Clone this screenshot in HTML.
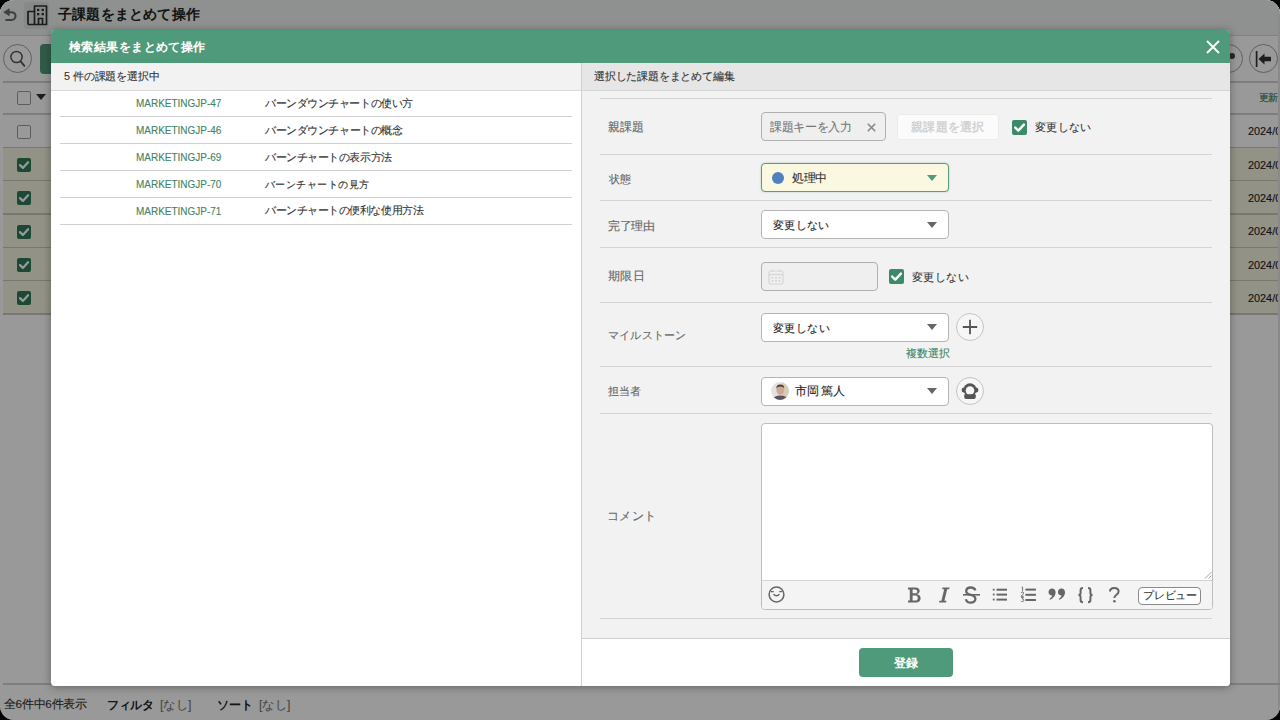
<!DOCTYPE html>
<html><head><meta charset="utf-8">
<style>
*{box-sizing:border-box;margin:0;padding:0}
html,body{width:1280px;height:720px;overflow:hidden;background:#000}
body{font-family:"Liberation Sans",sans-serif;color:#333;position:relative}
.a{position:absolute}
.t{position:absolute;white-space:nowrap;line-height:1;-webkit-text-stroke:0.12px currentColor}
#app{position:absolute;left:0;top:0;width:1280px;height:720px;background:#fff;overflow:hidden;border-radius:14px}
#ov{position:absolute;left:0;top:0;width:1280px;height:720px;background:rgba(0,0,0,0.4);border-radius:14px}
#modal{position:absolute;left:51px;top:30px;width:1179px;height:656px;background:#fff;border-radius:4px;overflow:hidden;box-shadow:0 1px 8px rgba(0,0,0,0.35)}
#ml{position:absolute;left:-51px;top:-30px;width:1280px;height:720px}
</style></head><body>

<div id="app">
<div class="a" style="left:0px;top:0px;width:1280px;height:35px;background:#edf2ee"></div>
<div class="a" style="left:0px;top:35px;width:1280px;height:1px;background:#d6d8d6"></div>
<div class="a" style="left:24px;top:2px;width:25px;height:27px;background:#e2e5e3;border-radius:3px"></div>
<svg class="a" style="left:2px;top:7px" width="16" height="16" viewBox="0 0 16 16"><path d="M1.8 5.2 L7.2 1.8 V8.6 Z" fill="#6a6a6a" stroke="#6a6a6a" stroke-width="0.8" stroke-linejoin="round"/><path d="M6.5 5.2 H9.6 a3.9 3.9 0 0 1 0 7.8 H4.2" fill="none" stroke="#6a6a6a" stroke-width="2.1" stroke-linecap="round"/></svg>
<svg class="a" style="left:26px;top:4px" width="23" height="23" viewBox="0 0 23 23"><path d="M2 20.5 V7.5 H8.5 M8.5 20.5 V2 H20.5 V20.5 Z M2 20.5 H20.5" fill="none" stroke="#2e2e2e" stroke-width="1.7" stroke-linejoin="round"/><rect x="11" y="4.8" width="2.3" height="2.3" fill="#2e2e2e"/><rect x="15.6" y="4.8" width="2.3" height="2.3" fill="#2e2e2e"/><rect x="11" y="9" width="2.3" height="2.3" fill="#2e2e2e"/><rect x="15.6" y="9" width="2.3" height="2.3" fill="#2e2e2e"/><path d="M12.5 20.5 V14.5 H16.5 V20.5" fill="none" stroke="#2e2e2e" stroke-width="1.7"/></svg>
<div class="t" style="left:58.00px;top:7.04px;font-size:14px;color:#222;font-weight:bold;-webkit-text-stroke:0;transform-origin:0 0;transform:scale(1.0143,1.0143);">子課題をまとめて操作</div>
<div class="a" style="left:3px;top:44px;width:29px;height:29px;border:1px solid #a0a0a0;border-radius:50%"></div>
<svg class="a" style="left:8px;top:49px" width="19" height="19" viewBox="0 0 19 19"><circle cx="8.5" cy="8" r="5.6" fill="none" stroke="#555" stroke-width="1.5"/><path d="M12.6 12.4 L16.4 16.8" stroke="#555" stroke-width="1.8" stroke-linecap="round"/></svg>
<div class="a" style="left:40px;top:44px;width:60px;height:30px;background:#4f9a7a;border-radius:4px"></div>
<div class="a" style="left:3px;top:81px;width:1277px;height:2px;background:#d2d2d2"></div>
<div class="a" style="left:17px;top:91px;width:14px;height:14px;border:1.6px solid #9a9a9a;border-radius:2px;background:#fff"></div>
<svg class="a" style="left:36.0px;top:94px" width="10" height="6" viewBox="0 0 10 6"><path d="M0 0 H10 L5.0 6 Z" fill="#333"/></svg>
<div class="a" style="left:3px;top:113px;width:1277px;height:2px;background:#d2d2d2"></div>
<div class="t" style="left:1259.14px;top:93.00px;font-size:11px;color:#2f7a58;font-weight:normal;transform-origin:0 0;transform:scale(0.8636,0.8636);">更新</div>
<div class="a" style="left:17px;top:125px;width:14px;height:14px;border:1.6px solid #9a9a9a;border-radius:2px;background:#fff"></div>
<div class="a" style="left:3px;top:147.3px;width:1277px;height:166.7px;background:#f5f3df"></div>
<div class="a" style="left:3px;top:146.82999999999998px;width:1277px;height:1.2px;background:#c9c8bb"></div>
<div class="a" style="left:3px;top:180.16px;width:1277px;height:1.2px;background:#c9c8bb"></div>
<div class="a" style="left:3px;top:213.49px;width:1277px;height:1.2px;background:#c9c8bb"></div>
<div class="a" style="left:3px;top:246.82px;width:1277px;height:1.2px;background:#c9c8bb"></div>
<div class="a" style="left:3px;top:280.15px;width:1277px;height:1.2px;background:#c9c8bb"></div>
<div class="a" style="left:3px;top:313.48px;width:1277px;height:1.2px;background:#c9c8bb"></div>
<div class="a" style="left:17px;top:158.0px;width:14px;height:14px;border-radius:2px;background:#2f7a58"><svg width="14" height="14" viewBox="0 0 15 15" style="position:absolute;left:0;top:0"><path d="M3.2 7.6 L6.3 10.6 L11.9 4.6" fill="none" stroke="#fff" stroke-width="2.4" stroke-linecap="round" stroke-linejoin="round"/></svg></div>
<div class="a" style="left:17px;top:191.32999999999998px;width:14px;height:14px;border-radius:2px;background:#2f7a58"><svg width="14" height="14" viewBox="0 0 15 15" style="position:absolute;left:0;top:0"><path d="M3.2 7.6 L6.3 10.6 L11.9 4.6" fill="none" stroke="#fff" stroke-width="2.4" stroke-linecap="round" stroke-linejoin="round"/></svg></div>
<div class="a" style="left:17px;top:224.66px;width:14px;height:14px;border-radius:2px;background:#2f7a58"><svg width="14" height="14" viewBox="0 0 15 15" style="position:absolute;left:0;top:0"><path d="M3.2 7.6 L6.3 10.6 L11.9 4.6" fill="none" stroke="#fff" stroke-width="2.4" stroke-linecap="round" stroke-linejoin="round"/></svg></div>
<div class="a" style="left:17px;top:257.99px;width:14px;height:14px;border-radius:2px;background:#2f7a58"><svg width="14" height="14" viewBox="0 0 15 15" style="position:absolute;left:0;top:0"><path d="M3.2 7.6 L6.3 10.6 L11.9 4.6" fill="none" stroke="#fff" stroke-width="2.4" stroke-linecap="round" stroke-linejoin="round"/></svg></div>
<div class="a" style="left:17px;top:291.32px;width:14px;height:14px;border-radius:2px;background:#2f7a58"><svg width="14" height="14" viewBox="0 0 15 15" style="position:absolute;left:0;top:0"><path d="M3.2 7.6 L6.3 10.6 L11.9 4.6" fill="none" stroke="#fff" stroke-width="2.4" stroke-linecap="round" stroke-linejoin="round"/></svg></div>
<div class="t" style="left:1247.80px;top:126.21px;font-size:11px;color:#222;font-weight:normal;transform-origin:0 0;transform:scale(0.9875,0.9875);">2024/0</div>
<div class="t" style="left:1247.80px;top:159.55px;font-size:11px;color:#222;font-weight:normal;transform-origin:0 0;transform:scale(0.9875,0.9875);">2024/0</div>
<div class="t" style="left:1247.80px;top:192.89px;font-size:11px;color:#222;font-weight:normal;transform-origin:0 0;transform:scale(0.9875,0.9875);">2024/0</div>
<div class="t" style="left:1247.80px;top:226.23px;font-size:11px;color:#222;font-weight:normal;transform-origin:0 0;transform:scale(0.9875,0.9875);">2024/0</div>
<div class="t" style="left:1247.80px;top:259.57px;font-size:11px;color:#222;font-weight:normal;transform-origin:0 0;transform:scale(0.9875,0.9875);">2024/0</div>
<div class="t" style="left:1247.80px;top:292.91px;font-size:11px;color:#222;font-weight:normal;transform-origin:0 0;transform:scale(0.9875,0.9875);">2024/0</div>
<div class="a" style="left:1214px;top:44px;width:29px;height:29px;border:1px solid #a0a0a0;border-radius:50%"></div>
<div class="a" style="left:1229px;top:53px;width:6px;height:6px;background:#444;border-radius:50%"></div>
<div class="a" style="left:1249px;top:44px;width:29px;height:29px;border:1px solid #a0a0a0;border-radius:50%"></div>
<svg class="a" style="left:1254px;top:50px" width="18" height="18" viewBox="0 0 18 18"><path d="M2.6 1 V17" stroke="#333" stroke-width="1.7"/><path d="M4.5 9 L10.5 3.5 V6.8 H17 V11.2 H10.5 V14.5 Z" fill="#333"/></svg>
<div class="a" style="left:1278px;top:0px;width:2px;height:720px;background:#e6e6e6"></div>
<div class="a" style="left:3px;top:683px;width:1277px;height:2px;background:#d2d2d2"></div>
<div class="t" style="left:3.75px;top:697.62px;font-size:12px;color:#333;font-weight:normal;transform-origin:0 0;transform:scale(0.9676,0.9676);">全6件中6件表示</div>
<div class="t" style="left:107.14px;top:698.77px;font-size:12px;color:#222;font-weight:bold;-webkit-text-stroke:0;transform-origin:0 0;transform:scale(0.9589,0.9589);">フィルタ</div>
<div class="t" style="left:159.58px;top:698.64px;font-size:12px;color:#777;font-weight:normal;transform-origin:0 0;transform:scale(1.0224,1.0224);">[なし]</div>
<div class="t" style="left:217.10px;top:698.82px;font-size:12px;color:#222;font-weight:bold;-webkit-text-stroke:0;transform-origin:0 0;transform:scale(0.9969,0.9969);">ソート</div>
<div class="t" style="left:258.73px;top:698.64px;font-size:12px;color:#777;font-weight:normal;transform-origin:0 0;transform:scale(1.0224,1.0224);">[なし]</div>
</div>
<div id="ov"></div>
<div id="modal"><div id="ml">
<div class="a" style="left:51px;top:30px;width:1179px;height:33px;background:#4f9a7a"></div>
<div class="t" style="left:69.00px;top:40.67px;font-size:12px;color:#fff;font-weight:bold;-webkit-text-stroke:0;transform-origin:0 0;transform:scale(1.0348,1.0348);">検索結果をまとめて操作</div>
<svg class="a" style="left:1206px;top:40px" width="14" height="14" viewBox="0 0 14 14"><path d="M1 1 L13 13 M13 1 L1 13" stroke="#fff" stroke-width="1.9"/></svg>
<div class="a" style="left:51px;top:63px;width:530px;height:27px;background:#f2f2f2"></div>
<div class="a" style="left:51px;top:90px;width:530px;height:1px;background:#dadada"></div>
<div class="t" style="left:63.77px;top:71.17px;font-size:11px;color:#333;font-weight:normal;transform-origin:0 0;transform:scale(0.9826,0.9826);">5 件の課題を選択中</div>
<div class="t" style="left:136.19px;top:98.44px;font-size:11px;color:#3f8464;font-weight:normal;transform-origin:0 0;transform:scale(0.9075,0.9625);">MARKETINGJP-47</div>
<div class="t" style="left:264.90px;top:98.12px;font-size:11px;color:#333;font-weight:normal;transform-origin:0 0;transform:scale(0.9591,0.9591);">バーンダウンチャートの使い方</div>
<div class="a" style="left:60px;top:116px;width:512px;height:1px;background:#d0d0d0"></div>
<div class="t" style="left:136.19px;top:125.44px;font-size:11px;color:#3f8464;font-weight:normal;transform-origin:0 0;transform:scale(0.9075,0.9625);">MARKETINGJP-46</div>
<div class="t" style="left:264.90px;top:125.41px;font-size:11px;color:#333;font-weight:normal;transform-origin:0 0;transform:scale(0.9609,0.9609);">バーンダウンチャートの概念</div>
<div class="a" style="left:60px;top:143px;width:512px;height:1px;background:#d0d0d0"></div>
<div class="t" style="left:136.19px;top:152.44px;font-size:11px;color:#3f8464;font-weight:normal;transform-origin:0 0;transform:scale(0.9075,0.9625);">MARKETINGJP-69</div>
<div class="t" style="left:264.90px;top:152.30px;font-size:11px;color:#333;font-weight:normal;transform-origin:0 0;transform:scale(0.9591,0.9591);">バーンチャートの表示方法</div>
<div class="a" style="left:60px;top:170px;width:512px;height:1px;background:#d0d0d0"></div>
<div class="t" style="left:136.19px;top:179.44px;font-size:11px;color:#3f8464;font-weight:normal;transform-origin:0 0;transform:scale(0.9075,0.9625);">MARKETINGJP-70</div>
<div class="t" style="left:264.90px;top:179.14px;font-size:11px;color:#333;font-weight:normal;transform-origin:0 0;transform:scale(0.9527,0.9527);">バーンチャートの見方</div>
<div class="a" style="left:60px;top:197px;width:512px;height:1px;background:#d0d0d0"></div>
<div class="t" style="left:136.19px;top:206.44px;font-size:11px;color:#3f8464;font-weight:normal;transform-origin:0 0;transform:scale(0.9075,0.9625);">MARKETINGJP-71</div>
<div class="t" style="left:264.90px;top:205.33px;font-size:11px;color:#333;font-weight:normal;transform-origin:0 0;transform:scale(0.9588,0.9588);">バーンチャートの便利な使用方法</div>
<div class="a" style="left:60px;top:224px;width:512px;height:1px;background:#d0d0d0"></div>
<div class="a" style="left:581px;top:63px;width:1px;height:623px;background:#d0d0d0"></div>
<div class="a" style="left:582px;top:63px;width:648px;height:27px;background:#e6e6e6"></div>
<div class="a" style="left:582px;top:90px;width:648px;height:1px;background:#d6d6d6"></div>
<div class="t" style="left:594.27px;top:70.80px;font-size:11px;color:#333;font-weight:normal;transform-origin:0 0;transform:scale(0.9823,0.9823);">選択した課題をまとめて編集</div>
<div class="a" style="left:582px;top:91px;width:648px;height:547px;background:#f2f2f2"></div>
<div class="a" style="left:600px;top:98px;width:612px;height:1px;background:#d4d4d4"></div>
<div class="a" style="left:600px;top:154px;width:612px;height:1px;background:#d4d4d4"></div>
<div class="a" style="left:600px;top:200px;width:612px;height:1px;background:#d4d4d4"></div>
<div class="a" style="left:600px;top:247px;width:612px;height:1px;background:#d4d4d4"></div>
<div class="a" style="left:600px;top:302px;width:612px;height:1px;background:#d4d4d4"></div>
<div class="a" style="left:600px;top:366px;width:612px;height:1px;background:#d4d4d4"></div>
<div class="a" style="left:600px;top:413px;width:612px;height:1px;background:#d4d4d4"></div>
<div class="a" style="left:600px;top:618px;width:612px;height:1px;background:#d4d4d4"></div>
<div class="t" style="left:607.74px;top:121.46px;font-size:12px;color:#666;font-weight:normal;transform-origin:0 0;transform:scale(1.0074,1.0074);">親課題</div>
<div class="t" style="left:609.00px;top:173.05px;font-size:12px;color:#666;font-weight:normal;transform-origin:0 0;transform:scale(0.9500,0.9500);">状態</div>
<div class="t" style="left:608.02px;top:219.87px;font-size:12px;color:#666;font-weight:normal;transform-origin:0 0;transform:scale(0.9783,0.9783);">完了理由</div>
<div class="t" style="left:607.97px;top:270.44px;font-size:12px;color:#666;font-weight:normal;transform-origin:0 0;transform:scale(1.0303,1.0303);">期限日</div>
<div class="t" style="left:608.07px;top:330.46px;font-size:12px;color:#666;font-weight:normal;transform-origin:0 0;transform:scale(0.9317,0.9317);">マイルストーン</div>
<div class="t" style="left:608.07px;top:385.86px;font-size:12px;color:#666;font-weight:normal;transform-origin:0 0;transform:scale(0.9314,0.9314);">担当者</div>
<div class="t" style="left:606.94px;top:510.10px;font-size:12px;color:#666;font-weight:normal;transform-origin:0 0;transform:scale(1.0302,1.0302);">コメント</div>
<div class="a" style="left:761px;top:112px;width:125px;height:29px;background:#efefef;border:1px solid #b0b0b0;border-radius:4px"></div>
<div class="t" style="left:770.00px;top:121.18px;font-size:12px;color:#777;font-weight:normal;transform-origin:0 0;transform:scale(0.9707,0.9707);">課題キーを入力</div>
<svg class="a" style="left:867px;top:123px" width="9" height="9" viewBox="0 0 9 9"><path d="M0.8 0.8 L8.2 8.2 M8.2 0.8 L0.8 8.2" stroke="#888" stroke-width="1.6"/></svg>
<div class="a" style="left:897px;top:114px;width:102px;height:26px;background:#fbfbfb;border:1px solid #ebebeb;border-radius:3px"></div>
<div class="t" style="left:911.30px;top:121.01px;font-size:12px;color:#d2d2d2;font-weight:bold;-webkit-text-stroke:0;transform-origin:0 0;transform:scale(1.0236,1.0236);">親課題を選択</div>
<div class="a" style="left:1012px;top:120px;width:15px;height:15px;border-radius:2px;background:#3d8a68"><svg width="15" height="15" viewBox="0 0 15 15" style="position:absolute;left:0;top:0"><path d="M3.2 7.6 L6.3 10.6 L11.9 4.6" fill="none" stroke="#fff" stroke-width="2.4" stroke-linecap="round" stroke-linejoin="round"/></svg></div>
<div class="t" style="left:1035.00px;top:122.29px;font-size:12px;color:#333;font-weight:normal;transform-origin:0 0;transform:scale(0.9433,0.9433);">変更しない</div>
<div class="a" style="left:761px;top:163px;width:188px;height:29px;background:#fbf8e1;border:1.5px solid #5b9c7c;border-radius:4px;box-shadow:0 0 2px rgba(79,154,122,0.45)"></div>
<div class="a" style="left:772px;top:172px;width:12px;height:12px;background:#4f80c0;border-radius:50%"></div>
<div class="t" style="left:791.80px;top:172.19px;font-size:12px;color:#333;font-weight:normal;transform-origin:0 0;transform:scale(0.9600,0.9600);">処理中</div>
<svg class="a" style="left:927.0px;top:175px" width="10" height="6" viewBox="0 0 10 6"><path d="M0 0 H10 L5.0 6 Z" fill="#4f9a7a"/></svg>
<div class="a" style="left:761px;top:210px;width:188px;height:29px;background:#fff;border:1px solid #b5b5b5;border-radius:4px"></div>
<div class="t" style="left:773.00px;top:219.65px;font-size:12px;color:#222;font-weight:normal;transform-origin:0 0;transform:scale(0.9417,0.9417);">変更しない</div>
<svg class="a" style="left:927.0px;top:222px" width="10" height="6" viewBox="0 0 10 6"><path d="M0 0 H10 L5.0 6 Z" fill="#666"/></svg>
<div class="a" style="left:761px;top:262px;width:117px;height:29px;background:#efefef;border:1px solid #b0b0b0;border-radius:4px"></div>
<svg class="a" style="left:768px;top:269px" width="16" height="16" viewBox="0 0 16 16"><rect x="1" y="2" width="14" height="13" rx="1.5" fill="none" stroke="#d5d5d5" stroke-width="1.2"/><path d="M1 5.5 H15" stroke="#d5d5d5" stroke-width="1.2"/><path d="M4.5 0.5 V3 M11.5 0.5 V3" stroke="#d5d5d5" stroke-width="1.2"/><g fill="#d5d5d5"><rect x="3.5" y="8" width="2" height="1.5"/><rect x="7" y="8" width="2" height="1.5"/><rect x="10.5" y="8" width="2" height="1.5"/><rect x="3.5" y="11" width="2" height="1.5"/><rect x="7" y="11" width="2" height="1.5"/><rect x="10.5" y="11" width="2" height="1.5"/></g></svg>
<div class="a" style="left:889px;top:269px;width:15px;height:15px;border-radius:2px;background:#3d8a68"><svg width="15" height="15" viewBox="0 0 15 15" style="position:absolute;left:0;top:0"><path d="M3.2 7.6 L6.3 10.6 L11.9 4.6" fill="none" stroke="#fff" stroke-width="2.4" stroke-linecap="round" stroke-linejoin="round"/></svg></div>
<div class="t" style="left:912.00px;top:271.10px;font-size:12px;color:#333;font-weight:normal;transform-origin:0 0;transform:scale(0.9500,0.9500);">変更しない</div>
<div class="a" style="left:761px;top:313px;width:188px;height:29px;background:#fff;border:1px solid #b5b5b5;border-radius:4px"></div>
<div class="t" style="left:773.00px;top:322.30px;font-size:12px;color:#222;font-weight:normal;transform-origin:0 0;transform:scale(0.9500,0.9500);">変更しない</div>
<svg class="a" style="left:927.0px;top:324px" width="10" height="6" viewBox="0 0 10 6"><path d="M0 0 H10 L5.0 6 Z" fill="#666"/></svg>
<div class="a" style="left:956px;top:313px;width:28px;height:28px;background:#f6f6f6;border:1px solid #c4c4c4;border-radius:50%"></div>
<svg class="a" style="left:962px;top:319px" width="16" height="16" viewBox="0 0 16 16"><path d="M8 0.8 V15.2 M0.8 8 H15.2" stroke="#555" stroke-width="1.8"/></svg>
<div class="t" style="left:906.25px;top:347.63px;font-size:11px;color:#3f8464;font-weight:normal;transform-origin:0 0;transform:scale(0.9849,0.9849);">複数選択</div>
<div class="a" style="left:761px;top:377px;width:188px;height:29px;background:#fff;border:1px solid #b5b5b5;border-radius:4px"></div>
<svg class="a" style="left:771px;top:382px" width="18" height="18" viewBox="0 0 18 18"><defs><clipPath id="av"><circle cx="9" cy="9" r="8.9"/></clipPath></defs><g clip-path="url(#av)"><rect width="18" height="18" fill="#e4e2de"/><rect x="11" width="7" height="18" fill="#d2ceb8"/><ellipse cx="9.3" cy="8" rx="3.9" ry="4.9" fill="#cfa894"/><path d="M5.3 6.5 Q5.2 2.4 9.3 2.4 Q13.3 2.4 13.3 6.5 Q12.5 4.3 9.3 4.4 Q6.2 4.3 5.3 6.5Z" fill="#4a3c34"/><path d="M1.5 18 Q2.5 13.6 9.3 13.4 Q16 13.6 17 18Z" fill="#5a5262"/></g></svg>
<div class="t" style="left:795.30px;top:385.48px;font-size:12px;color:#222;font-weight:normal;transform-origin:0 0;transform:scale(0.9620,0.9620);">市岡 篤人</div>
<svg class="a" style="left:927.0px;top:388px" width="10" height="6" viewBox="0 0 10 6"><path d="M0 0 H10 L5.0 6 Z" fill="#666"/></svg>
<div class="a" style="left:956px;top:377px;width:28px;height:28px;background:#f6f6f6;border:1px solid #c4c4c4;border-radius:50%"></div>
<svg class="a" style="left:961px;top:382px" width="18" height="18" viewBox="0 0 18 18"><circle cx="9" cy="7.8" r="6.6" fill="#555"/><ellipse cx="2.6" cy="8" rx="2" ry="2.5" fill="#555"/><ellipse cx="15.4" cy="8" rx="2" ry="2.5" fill="#555"/><circle cx="9" cy="8.6" r="4.3" fill="#f6f6f6"/><path d="M3.2 13.2 Q3.2 12.3 4.2 12.3 H13.8 Q14.8 12.3 14.8 13.2 V15 Q14.8 16.9 12.8 16.9 H5.2 Q3.2 16.9 3.2 15 Z" fill="#555"/></svg>
<div class="a" style="left:761px;top:423px;width:452px;height:187px;background:#fff;border:1px solid #bdbdbd;border-radius:4px"></div>
<div class="a" style="left:762px;top:580px;width:450px;height:29px;background:#f4f4f4;border-top:1px solid #d6d6d6;border-radius:0 0 3px 3px"></div>
<svg class="a" style="left:1204px;top:571px" width="8" height="8" viewBox="0 0 8 8"><path d="M1 7.5 L7.5 1 M4.5 7.5 L7.5 4.5" stroke="#999" stroke-width="0.9"/></svg>
<svg class="a" style="left:768px;top:586px" width="17" height="17" viewBox="0 0 17 17"><circle cx="8.5" cy="8.5" r="7.4" fill="none" stroke="#666" stroke-width="1.5"/><path d="M2.8 5.6 H5.8 M11.2 5.6 H14.2" stroke="#666" stroke-width="1.2"/><path d="M5.6 8.3 Q8.5 11.3 11.4 8.3" fill="none" stroke="#666" stroke-width="1.5"/></svg>
<svg class="a" style="left:907px;top:586px" width="15" height="18" viewBox="0 0 15 18"><path d="M1 1.5 H8.6 C12.6 1.5 13.3 5 12.2 6.6 C11.6 7.6 10.6 8 9.6 8.2 C11.6 8.5 13.6 9.5 13.6 12.3 C13.6 15.4 11 16.5 8.8 16.5 H1 V14.6 H2.8 V3.4 H1 Z M5.6 3.5 V7.3 H8.2 C9.6 7.3 10.2 6.4 10.2 5.4 C10.2 4.3 9.6 3.5 8.2 3.5 Z M5.6 9.4 V14.5 H8.6 C10 14.5 10.8 13.6 10.8 11.9 C10.8 10.3 10 9.4 8.6 9.4 Z" fill="#666"/></svg>
<svg class="a" style="left:938px;top:586px" width="12" height="18" viewBox="0 0 12 18"><path d="M4.5 1.5 H11.5 L11.2 3.2 H9.2 L6.4 14.8 H8.4 L8 16.5 H1 L1.4 14.8 H3.4 L6.2 3.2 H4.2 Z" fill="#666"/></svg>
<svg class="a" style="left:962px;top:586px" width="19" height="18" viewBox="0 0 19 18"><path d="M13.4 4.4 C12.8 2.6 11 1.5 8.8 1.5 C6 1.5 4.2 3.1 4.2 5.2 C4.2 7.6 6.6 8.3 8.9 8.9 C11.4 9.6 13.4 10.4 13.4 12.8 C13.4 15 11.4 16.6 8.7 16.6 C6.2 16.6 4.4 15.4 3.8 13.2" fill="none" stroke="#666" stroke-width="2.3"/><path d="M1 8.8 H18" stroke="#666" stroke-width="1.6"/></svg>
<svg class="a" style="left:992px;top:587px" width="16" height="15" viewBox="0 0 16 15"><g fill="#666"><rect x="0.8" y="1.8" width="1.8" height="1.8"/><rect x="0.8" y="6.6" width="1.8" height="1.8"/><rect x="0.8" y="11.6" width="1.8" height="1.8"/><rect x="4.5" y="1.7" width="10.5" height="2"/><rect x="4.5" y="6.6" width="10.5" height="2"/><rect x="4.5" y="11.6" width="10.5" height="2"/></g></svg>
<svg class="a" style="left:1020px;top:586px" width="17" height="17" viewBox="0 0 17 17"><g fill="#666"><rect x="5.4" y="2.6" width="10.5" height="2"/><rect x="5.4" y="7.8" width="10.5" height="2"/><rect x="5.4" y="13" width="10.5" height="2"/></g><g fill="none" stroke="#666" stroke-width="0.9"><path d="M1.6 1.6 L2.6 1 V5.2"/><path d="M1 7.2 Q1.4 6 2.4 6 Q3.6 6 3.6 7.1 Q3.6 8 1 10.3 H3.8"/><path d="M1 11.6 H3.4 L2.2 13 Q3.8 13 3.8 14.3 Q3.8 15.6 2.4 15.6 Q1.3 15.6 1 14.8"/></g></svg>
<svg class="a" style="left:1048px;top:588px" width="18" height="13" viewBox="0 0 18 13"><path d="M4 0.5 C6.2 0.5 7.6 2 7.6 4.2 C7.6 7.8 4.8 10.6 2 11.8 L1.4 11 C3 10 4 8.6 4.2 7.6 C2 7.6 0.5 6.2 0.5 4.1 C0.5 2 2 0.5 4 0.5 Z" fill="#666"/><path d="M13.4 0.5 C15.6 0.5 17 2 17 4.2 C17 7.8 14.2 10.6 11.4 11.8 L10.8 11 C12.4 10 13.4 8.6 13.6 7.6 C11.4 7.6 9.9 6.2 9.9 4.1 C9.9 2 11.4 0.5 13.4 0.5 Z" fill="#666"/></svg>
<svg class="a" style="left:1077px;top:586px" width="17" height="18" viewBox="0 0 17 18"><path d="M6 2 C4.2 2 3.6 2.6 3.6 4.2 V7 C3.6 8.3 3 8.9 1.6 9.1 C3 9.3 3.6 9.9 3.6 11.2 V14 C3.6 15.6 4.2 16.3 6 16.3 M11 2 C12.8 2 13.4 2.6 13.4 4.2 V7 C13.4 8.3 14 8.9 15.4 9.1 C14 9.3 13.4 9.9 13.4 11.2 V14 C13.4 15.6 12.8 16.3 11 16.3" fill="none" stroke="#666" stroke-width="2"/></svg>
<svg class="a" style="left:1108px;top:587px" width="13" height="16" viewBox="0 0 13 16"><path d="M2 4.6 C2 2.4 3.8 1 6.3 1 C8.9 1 10.6 2.5 10.6 4.6 C10.6 6.4 9.4 7.2 8.2 8 C7 8.8 6.4 9.4 6.4 11" fill="none" stroke="#666" stroke-width="2"/><circle cx="6.4" cy="14.2" r="1.3" fill="#666"/></svg>
<div class="a" style="left:1138px;top:587px;width:63px;height:18px;background:#fff;border:1px solid #8a8a8a;border-radius:4px"></div>
<div class="t" style="left:1142.72px;top:589.85px;font-size:11px;color:#333;font-weight:normal;transform-origin:0 0;transform:scale(0.9821,0.9821);">プレビュー</div>
<div class="a" style="left:582px;top:638px;width:648px;height:48px;background:#fff"></div>
<div class="a" style="left:582px;top:638px;width:648px;height:1px;background:#d0d0d0"></div>
<div class="a" style="left:859px;top:648px;width:94px;height:29px;background:#4f9a7a;border-radius:4px"></div>
<div class="t" style="left:893.90px;top:656.65px;font-size:12px;color:#fff;font-weight:bold;-webkit-text-stroke:0;transform-origin:0 0;transform:scale(1.0167,1.0167);">登録</div>
</div></div>
</body></html>
